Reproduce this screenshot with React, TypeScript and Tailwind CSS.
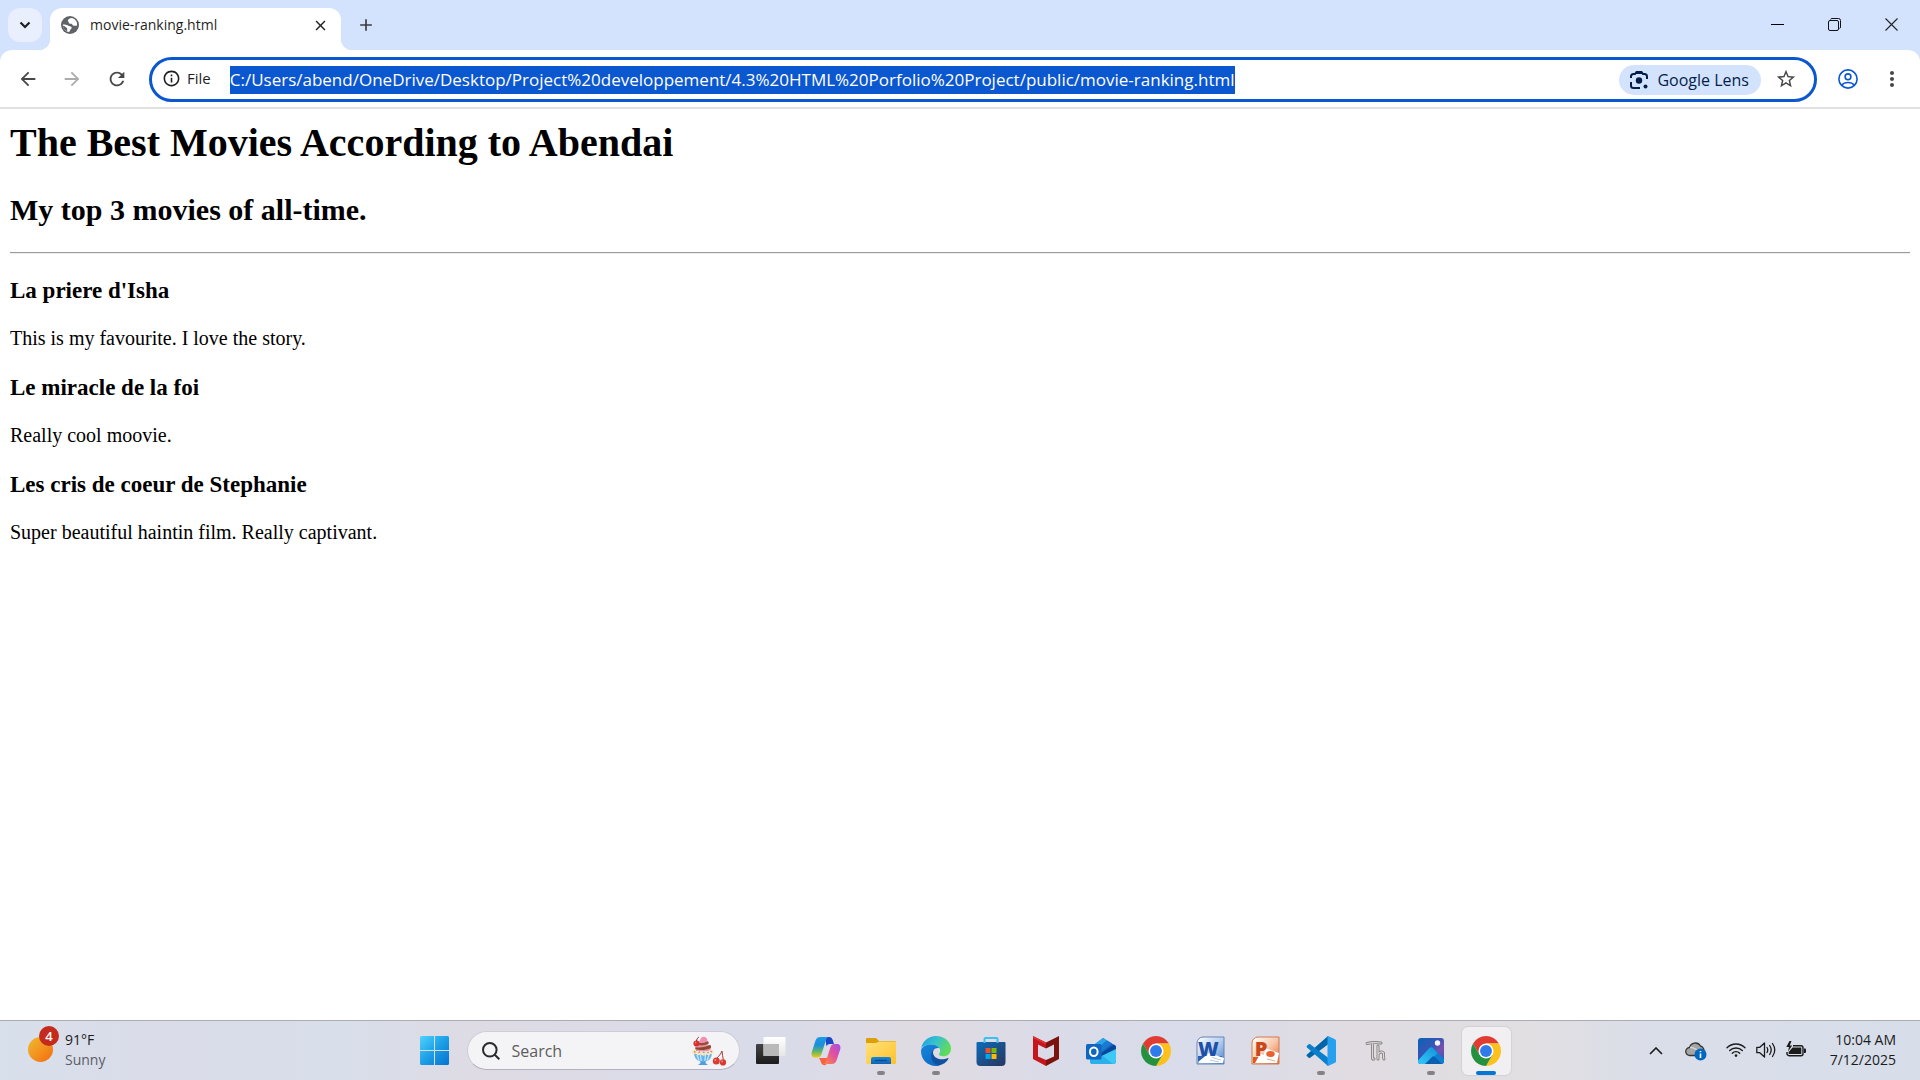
import type { ReactNode } from "react";
import {
  MdArrowBack,
  MdArrowForward,
  MdClose,
  MdAdd,
  MdInfoOutline,
  MdMoreVert,
  MdRefresh,
  MdStarBorder,
} from "react-icons/md";

const movies = [
  { title: "La priere d'Isha", note: "This is my favourite. I love the story." },
  { title: "Le miracle de la foi", note: "Really cool moovie." },
  { title: "Les cris de coeur de Stephanie", note: "Super beautiful haintin film. Really captivant." },
];

function GlobeIcon() {
  return (
    <svg viewBox="0 0 18 18" className="size-[18px] shrink-0" aria-hidden="true">
      <circle cx="9" cy="9" r="9" fill="#5f6368" />
      <path
        d="M11 2C9 2.200 7 3 6.800 4.400C6.700 5.600 8 5.500 7.800 6.600C7.600 7.800 9 7.700 10.300 7.800C11.500 8 11.300 9.300 12.600 9.700C14 10 15 9.400 16.100 9.500C16.500 6 14.500 3 11 2Z"
        fill="#fff"
      />
      <path
        d="M1.800 8.600C3.500 8.500 5 8.400 6.500 9.200C7.700 9.900 8.300 10.200 9.600 10.500C11 10.900 11.200 12.300 10 13C9 13.500 9.300 14.800 8 16.100C4.500 15.800 1.800 12.500 1.800 8.600Z"
        fill="#fff"
      />
      <path d="M2 9.700C3.500 9.900 4.600 11 5.600 11.800C6.500 12.500 6.200 13.600 6.200 15.300C3.500 14.200 2 12 2 9.700Z" fill="#5f6368" />
    </svg>
  );
}

function LensIcon() {
  return (
    <svg viewBox="0 0 20 20" className="size-5 shrink-0" fill="none" stroke="#041e49" strokeWidth="2" aria-hidden="true">
      <path d="M2 8V6.500a2.500 2.500 0 0 1 2.500-2.500H6l1.500-2h5L14 4h1.500A2.500 2.500 0 0 1 18 6.500V9" />
      <path d="M7 3h6" />
      <path d="M2 12v3.500A2.500 2.500 0 0 0 4.500 18H11" />
      <circle cx="10" cy="10.500" r="3.200" fill="#041e49" stroke="none" />
      <circle cx="16.500" cy="16.500" r="2" fill="#041e49" stroke="none" />
    </svg>
  );
}

function ProfileIcon() {
  return (
    <svg viewBox="0 0 20 20" className="size-5" fill="none" stroke="#0b57d0" strokeWidth="1.600" aria-hidden="true">
      <circle cx="10" cy="10" r="9.100" />
      <circle cx="10" cy="7.800" r="2.900" />
      <path d="M3.600 16.200C5.200 14.300 7.500 13.500 10 13.500s4.800.8 6.400 2.700" />
    </svg>
  );
}

function StartIcon() {
  return (
    <svg viewBox="0 0 29 29" className="size-[29px]" aria-hidden="true">
      <defs>
        <linearGradient id="start" x1="0" y1="0" x2="29" y2="29" gradientUnits="userSpaceOnUse">
          <stop offset="0" stopColor="#4fd3fc" />
          <stop offset="0.500" stopColor="#1c9fe6" />
          <stop offset="1" stopColor="#0573d0" />
        </linearGradient>
      </defs>
      <path
        fill="url(#start)"
        d="M1.500 0H14v14H0V1.500A1.500 1.500 0 0 1 1.500 0ZM15 0h12.500A1.500 1.500 0 0 1 29 1.500V14H15ZM0 15h14v14H1.500A1.500 1.500 0 0 1 0 27.500ZM15 15h14v12.500a1.500 1.500 0 0 1-1.500 1.500H15Z"
      />
    </svg>
  );
}

function SundaeIcon() {
  return (
    <svg viewBox="0 0 36 30" className="h-[30px] w-9 shrink-0" aria-hidden="true">
      <path d="M9 24.500h6l-.5 2.500 2.500 2H7l2.500-2Z" fill="#4f9fde" />
      <path d="M3 17h18c-.3 5-3 8.500-9 8.500S3.300 22 3 17Z" fill="#63b4ee" />
      <path d="M6 19l2 5.500M9.500 19l.7 6M14.500 19l-.7 6M18 19l-2 5.500" stroke="#c9e8fb" strokeWidth="1.200" />
      <path d="M.8 15.500C1 13.500 4 12.500 11.800 12.500s10.800 1 11 3c.1 1.800-1.300 2.700-3 2.500-1.300 1.500-3 1.500-4.300.6-1.700 1.400-4.200 1.400-5.800 0-1.500 1-3.500.8-4.500-.6-2.200.4-4.400-.6-4.400-2.500Z" fill="#f7e6c0" />
      <path d="M3 15.500l1.500 1M7.500 16.800l1.500-1M19.500 15l1.500 1" stroke="#e8705d" strokeWidth="1.100" />
      <path d="M12 16l1.500.8M16.500 17l1-1M5 14.200l1.200.4" stroke="#5b9fe0" strokeWidth="1.100" />
      <path d="M4 12.500C4.500 10.500 8 9.800 12.500 9c3.500-.6 6-.4 7.200 1.200 1 1.600.2 3.300-1.700 4.200-4 1.600-13.500 1.400-14-1.900Z" fill="#ee8fb1" />
      <path d="M4.500 11.200c5 .8 10-.3 14.800-2.200 1 1 1 2 .3 2.900C15.500 14 9 14.600 5 13.200c-.7-.6-.9-1.300-.5-2Z" fill="#8a4a2c" />
      <path d="M7 9C6.500 7 8 6 9 4.500 9.500 2 11 .6 13 .8c2.500.2 3.300 2 3.200 4 1.600.6 2 2.200 1.200 3.400C15 10.200 9 11 7 9Z" fill="#f08fb2" />
      <path d="M8 6.900c3 .6 6-.2 8.700-1.700.9.700 1 1.700.4 2.600-3 1.600-6.600 2.200-9.500 1.300Z" fill="#8f5033" />
      <circle cx="5.500" cy="7.500" r="3.100" fill="#d9302c" />
      <circle cx="4.600" cy="6.600" r="0.800" fill="#f28b80" />
      <path d="M5.500 5C5.800 3.200 6.400 2 7.800 1" stroke="#7a2a25" fill="none" />
      <path d="M25.500 22.500c2-2 4.300-4.500 5.500-7.500.2 3 .8 5.500 1.300 8.500" stroke="#a33b33" fill="none" />
      <circle cx="25.300" cy="25" r="3.500" fill="#dd3b30" />
      <circle cx="32" cy="26.400" r="3.100" fill="#d8372d" />
      <circle cx="24.300" cy="24" r="1" fill="#f4938a" />
      <circle cx="31.200" cy="25.500" r="0.900" fill="#f4938a" />
    </svg>
  );
}

function TaskViewIcon() {
  return (
    <svg viewBox="0 0 30 30" className="size-[30px]" aria-hidden="true">
      <defs>
        <linearGradient id="tv" x1="0" y1="0" x2="0" y2="1">
          <stop offset="0" stopColor="#444" />
          <stop offset="1" stopColor="#1c1c1c" />
        </linearGradient>
        <linearGradient id="tvw" x1="0" y1="0" x2="0" y2="1">
          <stop offset="0" stopColor="#fff" />
          <stop offset="1" stopColor="#e6e6e8" />
        </linearGradient>
      </defs>
      <rect x="0" y="8" width="23" height="20" rx="1" fill="url(#tv)" />
      <rect x="7.500" y="1" width="22" height="19" rx="1" fill="url(#tvw)" />
      <path d="M7.500 8H23v12H7.500Z" fill="#b9b9b9" />
    </svg>
  );
}

function CopilotIcon() {
  return (
    <svg viewBox="0 0 30 30" className="size-[30px]" aria-hidden="true">
      <defs>
        <linearGradient id="cpa" x1="0" y1="0" x2="0" y2="1">
          <stop offset="0" stopColor="#1b9be8" />
          <stop offset="0.400" stopColor="#1d8fd8" />
          <stop offset="0.700" stopColor="#5fb56a" />
          <stop offset="1" stopColor="#f2c713" />
        </linearGradient>
        <linearGradient id="cpb" x1="1" y1="0" x2="0" y2="1">
          <stop offset="0" stopColor="#a34bea" />
          <stop offset="0.450" stopColor="#e0529f" />
          <stop offset="1" stopColor="#ff8a3c" />
        </linearGradient>
      </defs>
      <path d="M14 1h4c2 0 3 1 3.700 3l1.300 4h-4c-2 0-3 1-3.500 2.500Z" fill="#1a46c8" />
      <path d="M8 22h7c2 0 3-1 3.600-3l-3 9c-.6 1-1.600 1.500-3 1-2-.5-2.400-2-3-4Z" fill="#f7633f" />
      <path d="M9.500 1H18c-1.500 0-2.300 1-3 3l-4.500 14c-.7 2.500-2 3.500-4 3.500H4C1 21.500 0 19 .8 16L4.500 4.500C5.300 2 7 1 9.500 1Z" fill="url(#cpa)" />
      <path d="M20.500 28H12c1.500 0 2.300-1 3-3l4.500-14c.7-2 2-3 4-3H26c3 0 4 2.500 3.200 5.500L25.500 24.500c-.8 2.500-2.500 3.500-5 3.500Z" fill="url(#cpb)" />
    </svg>
  );
}

function FolderIcon() {
  return (
    <svg viewBox="0 0 30 30" className="size-[30px]" aria-hidden="true">
      <defs>
        <linearGradient id="fd" x1="0" y1="0" x2="1" y2="1">
          <stop offset="0" stopColor="#ffe17a" />
          <stop offset="1" stopColor="#fdc22b" />
        </linearGradient>
        <linearGradient id="fdb" x1="0" y1="0" x2="0" y2="1">
          <stop offset="0" stopColor="#1c84d6" />
          <stop offset="1" stopColor="#0f63b5" />
        </linearGradient>
      </defs>
      <path d="M1 2h9l3 3h16a1 1 0 0 1 1 1v6H0V3a1 1 0 0 1 1-1Z" fill="#dd9f0a" />
      <path d="M0 7h10l3-1.500h17V27a1 1 0 0 1-1 1H1a1 1 0 0 1-1-1Z" fill="url(#fd)" />
      <path d="M5 28v-5a2 2 0 0 1 2-2h16a2 2 0 0 1 2 2v5Z" fill="url(#fdb)" />
      <path d="M9 24.500h12" stroke="#0a4a8f" strokeWidth="1.200" />
    </svg>
  );
}

function EdgeIcon() {
  return (
    <svg viewBox="0 0 30 30" className="size-[30px]" aria-hidden="true">
      <defs>
        <linearGradient id="ega" x1="0" y1="0" x2="1" y2="0.400">
          <stop offset="0" stopColor="#1b9de2" />
          <stop offset="0.500" stopColor="#35c1d0" />
          <stop offset="1" stopColor="#5fdc5a" />
        </linearGradient>
        <linearGradient id="egb" x1="0" y1="0" x2="0.600" y2="1">
          <stop offset="0" stopColor="#1587dc" />
          <stop offset="1" stopColor="#0c6cc6" />
        </linearGradient>
      </defs>
      <path d="M.3 12C1.500 5 7.500 0 15 0c8.500 0 15 6 15 12.500 0 5-3.500 7.800-7.500 7.800-3.300 0-5-1.500-4.500-2.500.5-.8 1.200-1.500 1.200-3.300C19.200 11 15 8.500 10 8.500 6 8.500 2 10 .3 12Z" fill="url(#ega)" />
      <path d="M0 15C0 11 5 8.500 10 8.500c4 0 7 1.500 8.500 3.800C15 11 10.500 14 10.500 19c0 6 4.500 10.500 8 10.500-1 .4-2.200.5-3.500.5C6.500 30 0 23.500 0 15Z" fill="url(#egb)" />
      <path d="M14.500 12.300C12 13.300 10 16 10 19.500c0 5 3.500 9.500 8 10 4-.8 7.500-3.200 9.300-6.500.5-.9-.3-1.200-1-.8C24.500 23 23 23.300 21 23.300c-5.500 0-9-3.300-9-6.800 0-1.800 1-3.500 2.500-4.200Z" fill="#10529f" />
    </svg>
  );
}

function StoreIcon() {
  return (
    <svg viewBox="0 0 30 30" className="size-[30px]" aria-hidden="true">
      <defs>
        <linearGradient id="st" x1="0" y1="0" x2="1" y2="1">
          <stop offset="0" stopColor="#0b6cbd" />
          <stop offset="0.600" stopColor="#1f4a80" />
          <stop offset="1" stopColor="#243763" />
        </linearGradient>
      </defs>
      <path d="M8.500 8V3a1 1 0 0 1 1-1h11a1 1 0 0 1 1 1v5" fill="none" stroke="#3cc0f2" strokeWidth="2" />
      <path d="M1.500 6h27a1 1 0 0 1 1 1v19a4 4 0 0 1-4 4h-21a4 4 0 0 1-4-4V7a1 1 0 0 1 1-1Z" fill="url(#st)" />
      <path d="M8.500 6v1M21.500 6v1" stroke="#3cc0f2" strokeWidth="2" />
      <path d="M9.500 12h5v5h-5Z" fill="#f25022" />
      <path d="M15.500 12h5v5h-5Z" fill="#7fba00" />
      <path d="M9.500 18h5v5h-5Z" fill="#00a4ef" />
      <path d="M15.500 18h5v5h-5Z" fill="#ffb900" />
    </svg>
  );
}

function McAfeeIcon() {
  return (
    <svg viewBox="0 0 30 30" className="size-[30px]" aria-hidden="true">
      <path d="M2 0l13 6.500v6L7 8.500v12L15 24v6L2 23Z" fill="#c4161c" />
      <path d="M28 0L15 6.500v6l8-4v12L15 24v6l13-7Z" fill="#7d130f" />
      <path d="M2 0l13 6.500v2L2 2Z" fill="#e0302f" />
    </svg>
  );
}

function OutlookIcon() {
  return (
    <svg viewBox="0 0 30 30" className="size-[30px]" aria-hidden="true">
      <path d="M4 12L17 2l13 8v15a3 3 0 0 1-3 3H7a3 3 0 0 1-3-3Z" fill="#1268c0" />
      <path d="M7 9.500L17 2l4 2.500L11 13Z" fill="#2aa4e8" />
      <path d="M11 13L21 4.500l5 3L14 17Z" fill="#1a79d0" />
      <path d="M14 18L28 8.500l2 2v3L16 22Z" fill="#0a479c" />
      <path d="M30 13v12a3 3 0 0 1-3 3H7a3 3 0 0 1-3-2.500Z" fill="#3ccaf5" />
      <path d="M4 22l13-2 10 8H7a3 3 0 0 1-3-3Z" fill="#2bb0ea" />
      <rect x="0" y="8" width="15.500" height="15.500" rx="1.500" fill="#0f67c1" />
      <ellipse cx="7.800" cy="15.700" rx="3.800" ry="4.300" fill="none" stroke="#fff" strokeWidth="2" />
    </svg>
  );
}

function ChromeIcon() {
  return (
    <svg viewBox="0 0 48 48" className="size-[30px]" aria-hidden="true">
      <path d="M24 12H44.780A24 24 0 0 0 3.220 12L13.610 30Z" fill="#e03c31" />
      <path d="M34.390 30L24 48A24 24 0 0 0 44.780 12H24Z" fill="#fcc21b" />
      <path d="M13.610 30L3.220 12A24 24 0 0 0 24 48L34.390 30Z" fill="#24913f" />
      <circle cx="24" cy="24" r="12" fill="#fff" />
      <circle cx="24" cy="24" r="9.500" fill="#2f7bea" />
    </svg>
  );
}

function WordIcon() {
  return (
    <svg viewBox="0 0 30 30" className="size-[30px]" aria-hidden="true">
      <defs>
        <linearGradient id="wd" x1="0" y1="0" x2="1" y2="1">
          <stop offset="0" stopColor="#ffffff" />
          <stop offset="0.500" stopColor="#b8d0ee" />
          <stop offset="1" stopColor="#4d82cc" />
        </linearGradient>
      </defs>
      <path d="M7 1h21v27H1V7a6 6 0 0 1 6-6Z" fill="url(#wd)" stroke="#6585b4" />
      <path d="M2 20h24v7H2Z" fill="#2c60b5" />
      <path d="M2 26l11-9 15 5-1 5H3Z" fill="#fff" />
      <path d="M14 24l9 2M16 21.500l9 2.500" stroke="#a9b9d4" strokeWidth="0.800" />
      <text x="12.500" y="20" textAnchor="middle" fontFamily="Open Sans, sans-serif" fontWeight="800" fontSize="20" fill="#1d50a8">W</text>
    </svg>
  );
}

function PowerPointIcon() {
  return (
    <svg viewBox="0 0 30 30" className="size-[30px]" aria-hidden="true">
      <defs>
        <linearGradient id="pp" x1="0" y1="0" x2="1" y2="1">
          <stop offset="0" stopColor="#ffffff" />
          <stop offset="0.500" stopColor="#f9c9ac" />
          <stop offset="1" stopColor="#e3662c" />
        </linearGradient>
      </defs>
      <path d="M7 1h21v27H1V7a6 6 0 0 1 6-6Z" fill="url(#pp)" stroke="#cf7a50" />
      <path d="M2 21h24v6H2Z" fill="#dc5a20" />
      <path d="M4 27l5-9 4 1 1-7 14 5-2 10Z" fill="#fff" />
      <text x="10" y="20" textAnchor="middle" fontFamily="Open Sans, sans-serif" fontWeight="800" fontSize="20" fill="#c8481a">P</text>
      <ellipse cx="19.500" cy="18" rx="4.300" ry="3" fill="#e8622e" />
      <path d="M16 23l8 2" stroke="#e2a88c" />
    </svg>
  );
}

function VsCodeIcon() {
  return (
    <svg viewBox="0 0 30 30" className="size-[30px]" aria-hidden="true">
      <path d="M22 0L1 18.500c-.6.600-.6 1.300 0 1.800l1.700 1.500c.5.400 1 .4 1.500 0L22.500 8Z" fill="#0065a9" />
      <path d="M22 30L1 11.500c-.6-.6-.6-1.300 0-1.800l1.700-1.500c.5-.4 1-.4 1.500 0L22.500 22Z" fill="#0a80cc" />
      <path d="M22 0l7 3.200c.6.300 1 .9 1 1.600v20.400c0 .7-.4 1.300-1 1.600L22 30c-.4.200-.5-.3-.5-.8V.8c0-.5.100-1 .5-.8Z" fill="#27a0f0" />
    </svg>
  );
}

function ThonnyIcon() {
  return (
    <svg viewBox="0 0 30 30" className="size-[30px]" fill="none" aria-hidden="true">
      <g stroke="#858281" strokeWidth="3" strokeLinecap="round" strokeLinejoin="round">
        <path d="M6 7.500Q12 6 20 7M11.500 8V22.500Q12 23.500 13 23" />
        <path d="M17 10V23M17 18Q20 14.500 22.500 17V21.500L23 23" />
      </g>
      <g stroke="#dcdad9" strokeWidth="1.200" strokeLinecap="round" strokeLinejoin="round">
        <path d="M6 7.500Q12 6 20 7M11.500 8V22.500Q12 23.500 13 23" />
        <path d="M17 10V23M17 18Q20 14.500 22.500 17V21.500L23 23" />
      </g>
    </svg>
  );
}

function PhotosIcon() {
  return (
    <svg viewBox="0 0 30 30" className="size-[30px]" aria-hidden="true">
      <defs>
        <linearGradient id="ph" x1="0" y1="0" x2="1" y2="1">
          <stop offset="0" stopColor="#0a62b9" />
          <stop offset="0.450" stopColor="#3a55b5" />
          <stop offset="0.650" stopColor="#7a4fae" />
          <stop offset="1" stopColor="#1c5bb4" />
        </linearGradient>
        <linearGradient id="phm" x1="0" y1="1" x2="1" y2="0">
          <stop offset="0" stopColor="#35d0fa" />
          <stop offset="1" stopColor="#1492dc" />
        </linearGradient>
        <clipPath id="phc">
          <rect x="2" y="2" width="26" height="26" rx="3" />
        </clipPath>
      </defs>
      <g clipPath="url(#phc)">
        <rect x="2" y="2" width="26" height="26" fill="url(#ph)" />
        <path d="M2 24L13.500 12q2-2 4 0L30 25v5H2Z" fill="#0f7fd0" />
        <path d="M0 27L13 12.500q2-2 4 0l4.500 4.500L10 30H0Z" fill="url(#phm)" />
        <path d="M9 28l7-7q1.500-1.500 3 0l7 7Z" fill="#0a5fb0" />
        <circle cx="21.500" cy="7" r="2.700" fill="#f3f3f8" />
      </g>
    </svg>
  );
}

function OneDriveIcon() {
  return (
    <svg viewBox="0 0 22 20" className="h-5 w-[22px]" aria-hidden="true">
      <path d="M5 14.500a4 4 0 0 1-.5-8A6 6 0 0 1 15.500 5 4.500 4.500 0 0 1 18 12L14 14.500Z" fill="#a5a5a5" stroke="#343434" strokeWidth="1.300" />
      <path d="M5 6.500q3-.5 5 1.500l5 3" stroke="#d8d8d8" strokeWidth="1.500" fill="none" />
      <circle cx="15.500" cy="13.500" r="6" fill="#0067c0" />
      <path d="M15.500 12.500V17M15.500 10v1.300" stroke="#fff" strokeWidth="1.600" />
    </svg>
  );
}

function WifiIcon() {
  return (
    <svg viewBox="0 0 20 16" className="h-4 w-5" fill="none" stroke="#1b1b1b" strokeWidth="1.400" strokeLinecap="round" aria-hidden="true">
      <path d="M1 5.800a12.500 12.500 0 0 1 18 0M3.700 8.600a8.800 8.800 0 0 1 12.600 0M6.300 11.200a5.200 5.200 0 0 1 7.400 0" />
      <circle cx="10" cy="13.600" r="1.300" fill="#1b1b1b" stroke="none" />
    </svg>
  );
}

function SpeakerIcon() {
  return (
    <svg viewBox="0 0 20 18" className="h-[18px] w-5" fill="none" stroke="#1b1b1b" strokeWidth="1.300" strokeLinecap="round" strokeLinejoin="round" aria-hidden="true">
      <path d="M.8 6.300v5.400h3L8.500 16V2L3.800 6.300Z" />
      <path d="M11 6.500q1.500 2.500 0 5M13.700 4.500q3 4.500 0 9M16.500 2.500q4.500 6.500 0 13" />
    </svg>
  );
}

function BatteryIcon() {
  return (
    <svg viewBox="0 0 20 18" className="h-[18px] w-5" aria-hidden="true">
      <path d="M7 4.700h8a2 2 0 0 1 2 2v6a2 2 0 0 1-2 2H3a2 2 0 0 1-2-2V11" fill="none" stroke="#1b1b1b" strokeWidth="1.400" />
      <path d="M6.500 6.500H15.300v6.500H2.700V11Z" fill="#1b1b1b" />
      <path d="M18 7.500h1q1 0 1 1v2.500q0 1-1 1h-1Z" fill="#1b1b1b" />
      <path d="M3.500 0L.3 6H3L2 10.500 6.200 4.500H3.800L5.500 0Z" fill="#1b1b1b" />
    </svg>
  );
}

type TaskItem = { label: string; icon: ReactNode; open?: boolean; active?: boolean };

const taskItems: TaskItem[] = [
  { label: "Task View", icon: <TaskViewIcon /> },
  { label: "Copilot", icon: <CopilotIcon /> },
  { label: "File Explorer", icon: <FolderIcon />, open: true },
  { label: "Microsoft Edge", icon: <EdgeIcon />, open: true },
  { label: "Microsoft Store", icon: <StoreIcon /> },
  { label: "McAfee", icon: <McAfeeIcon /> },
  { label: "Outlook", icon: <OutlookIcon /> },
  { label: "Google Chrome", icon: <ChromeIcon /> },
  { label: "Word", icon: <WordIcon /> },
  { label: "PowerPoint", icon: <PowerPointIcon /> },
  { label: "Visual Studio Code", icon: <VsCodeIcon />, open: true },
  { label: "Thonny", icon: <ThonnyIcon /> },
  { label: "Photos", icon: <PhotosIcon />, open: true },
  { label: "Google Chrome window", icon: <ChromeIcon />, active: true },
];

function TaskButton({ item }: { item: TaskItem }) {
  return (
    <button
      type="button"
      aria-label={item.label}
      className={`relative mx-[3px] flex h-12 w-[49px] items-center justify-center rounded-md ${
        item.active ? "bg-[#f1eff2] shadow-[0_0_1px_1px_rgba(0,0,0,0.06)]" : ""
      }`}
    >
      {item.icon}
      {item.open && <span className="absolute bottom-0 h-1 w-2 rounded-full bg-[#858286]" />}
      {item.active && <span className="absolute bottom-0 h-1 w-5 rounded-full bg-[#0078d4]" />}
    </button>
  );
}

function TabStrip() {
  return (
    <header className="flex h-[50px] items-end bg-[#d3e2fd] pl-2">
      <button type="button" aria-label="Search tabs" className="mb-2 flex size-[34px] items-center justify-center rounded-xl bg-[#e9effd]">
        <svg viewBox="0 0 12 8" className="h-2 w-3" fill="none" stroke="#1f1f1f" strokeWidth="2.200" aria-hidden="true">
          <path d="M1.500 1.500L6 6l4.500-4.500" />
        </svg>
      </button>
      <div className="relative ml-2 flex h-[42px] w-[291px] items-center rounded-t-xl bg-white pr-3 pb-2 pl-[11px] before:absolute before:bottom-0 before:-left-3 before:size-3 before:bg-[radial-gradient(circle_at_0_0,transparent_12px,white_13px)] after:absolute after:-right-3 after:bottom-0 after:size-3 after:bg-[radial-gradient(circle_at_100%_0,transparent_12px,white_13px)]">
        <GlobeIcon />
        <span className="ml-[11px] flex-1 text-sm text-[#1f1f1f]">movie-ranking.html</span>
        <button type="button" aria-label="Close tab" className="text-[#1f1f1f]">
          <MdClose size={17} />
        </button>
      </div>
      <button type="button" aria-label="New tab" className="mb-[15px] ml-[15px] text-[#3c3c3c]">
        <MdAdd size={20} />
      </button>
      <div className="ml-auto flex h-full pb-1.5">
        <button type="button" aria-label="Minimize" className="flex w-[57px] items-center justify-center pt-1">
          <span className="h-px w-[13px] bg-black" />
        </button>
        <button type="button" aria-label="Restore" className="flex w-[57px] items-center justify-center pt-1">
          <svg viewBox="0 0 13 13" className="size-[13px]" fill="none" stroke="#111" aria-hidden="true">
            <rect x="0.500" y="2.500" width="10" height="10" rx="1.500" />
            <path d="M2.500 1.500q.3-1 1.500-1h6.500q2 0 2 2V9q0 1.200-1 1.500" />
          </svg>
        </button>
        <button type="button" aria-label="Close" className="flex w-[57px] items-center justify-center pt-1">
          <svg viewBox="0 0 13 13" className="size-[13px]" stroke="#222" strokeWidth="1.100" aria-hidden="true">
            <path d="M.5.5l12 12M12.500.5l-12 12" />
          </svg>
        </button>
      </div>
    </header>
  );
}

function Toolbar() {
  return (
    <div className="bg-[#d3e2fd]">
      <nav className="flex items-center rounded-t-xl border-b-2 border-[#e1e1e1] bg-white pt-[7px] pb-[5px] pl-[17px] text-[#474747]">
        <button type="button" aria-label="Back" className="pb-0.5">
          <MdArrowBack size={22} />
        </button>
        <button type="button" aria-label="Forward" disabled className="ml-[22px] pb-0.5 text-[#acacac]">
          <MdArrowForward size={22} />
        </button>
        <button type="button" aria-label="Reload" className="mr-[21px] ml-[23px] pb-0.5">
          <MdRefresh size={22} />
        </button>
        <div className="flex h-[45px] flex-1 items-center rounded-full border-[3px] border-[#0b57d0] pr-[17px] pl-2.5">
          <button type="button" className="flex items-center gap-1.5 pb-0.5 text-[#1f1f1f]">
            <MdInfoOutline size={19} />
            <span className="text-[15px] font-medium">File</span>
          </button>
          <div className="ml-[19px] flex flex-1">
            <input
              type="text"
              aria-label="Address and search bar"
              readOnly
              value="C:/Users/abend/OneDrive/Desktop/Project%20developpement/4.3%20HTML%20Porfolio%20Project/public/movie-ranking.html"
              className="field-sizing-content h-7 bg-[#0b57d0] text-[17px] text-white outline-none"
            />
          </div>
          <button type="button" className="flex h-[30px] items-center gap-2 rounded-full bg-[#d3e2fd] pr-3 pl-2.5 text-base font-medium text-[#041e49]">
            <LensIcon />
            Google Lens
          </button>
          <button type="button" aria-label="Bookmark this tab" className="ml-3.5 pb-0.5">
            <MdStarBorder size={22} />
          </button>
        </div>
        <button type="button" aria-label="Profile" className="ml-[21px] pb-0.5">
          <ProfileIcon />
        </button>
        <button type="button" aria-label="Menu" className="mr-4 ml-[22px] pb-0.5">
          <MdMoreVert size={24} />
        </button>
      </nav>
    </div>
  );
}

function Taskbar() {
  return (
    <footer className="flex h-[60px] items-center border-t border-[#aaabb4] bg-[linear-gradient(90deg,#d8e0eb_0%,#dadce9_8%,#d8deea_18%,#dedbe4_25%,#dcdbe6_31%,#d9dbe9_40%,#e0dbe2_48%,#dadbe8_55%,#d9dcea_62%,#e0dce2_70%,#e1dfe2_80%,#dadee9_86%,#d7deea_100%)]">
      <div className="flex min-w-0 flex-1">
        <button type="button" className="relative flex items-center gap-3 pb-0.5 pl-7 text-left text-sm leading-5">
          <span className="size-[25px] rounded-full bg-linear-to-br from-[#eebb30] to-[#f2690c]" />
          <span className="absolute top-0 left-[39px] -mt-1 flex size-5 items-center justify-center rounded-full bg-[#c42b1c] text-[13px] font-semibold text-white">4</span>
          <span>
            <span className="block text-[#1b1b1b]">91°F</span>
            <span className="block text-[#5c5d66]">Sunny</span>
          </span>
        </button>
      </div>
      <div className="flex items-center">
        <button type="button" aria-label="Start" className="flex h-12 w-[55px] items-center justify-center">
          <StartIcon />
        </button>
        <label className="mr-1 ml-[5px] flex h-[39px] w-[273px] items-center rounded-full border border-[#cfccd8] border-b-[#b3b1bf] bg-[#f4f4f7] pr-3 pl-3.5">
          <svg viewBox="0 0 18 18" className="size-[18px] shrink-0" fill="none" stroke="#2a2a2a" strokeWidth="2" aria-hidden="true">
            <circle cx="7.800" cy="7.800" r="6.800" />
            <path d="M12.500 12.500l4.800 4.800" />
          </svg>
          <input type="text" aria-label="Search" placeholder="Search" className="ml-3 min-w-0 flex-1 bg-transparent text-base outline-none placeholder:text-[#5d5d5d]" />
          <SundaeIcon />
        </label>
        {taskItems.map((item) => (
          <TaskButton key={item.label} item={item} />
        ))}
      </div>
      <div className="flex min-w-0 flex-1 items-center justify-end">
        <button type="button" aria-label="Show hidden icons" className="mr-[22px]">
          <svg viewBox="0 0 14 8" className="h-2 w-3.5" fill="none" stroke="#1b1b1b" strokeWidth="1.600" aria-hidden="true">
            <path d="M1 7l6-6 6 6" />
          </svg>
        </button>
        <button type="button" aria-label="OneDrive" className="mr-[19px]">
          <OneDriveIcon />
        </button>
        <button type="button" aria-label="Network, volume and battery" className="mr-6 flex items-center gap-2.5 pb-0.5">
          <WifiIcon />
          <SpeakerIcon />
          <BatteryIcon />
        </button>
        <button type="button" className="mr-6 pb-0.5 text-right text-sm leading-5 whitespace-nowrap text-[#1b1b1b]">
          <span className="block">10:04 AM</span>
          <span className="block">7/12/2025</span>
        </button>
      </div>
    </footer>
  );
}

export default function App() {
  return (
    <div className="flex min-h-screen flex-col bg-white font-['Open_Sans',sans-serif]">
      <TabStrip />
      <Toolbar />
      <main className="flex-1 p-2.5 font-['Liberation_Serif',serif] text-xl text-black">
        <h1 className="text-[40px] leading-[48px] font-bold">The Best Movies According to Abendai</h1>
        <h2 className="mt-[26px] text-3xl leading-[34px] font-bold">My top 3 movies of all-time.</h2>
        <hr className="mt-[25px] mb-[23px] h-0.5 border-t border-b border-t-[#9a9a9a] border-b-[#eeeeee]" />
        {movies.map((movie) => (
          <section key={movie.title} className="mb-6">
            <h3 className="text-[23px] leading-[27px] font-bold">{movie.title}</h3>
            <p className="mt-[22px] leading-6">{movie.note}</p>
          </section>
        ))}
      </main>
      <Taskbar />
    </div>
  );
}
